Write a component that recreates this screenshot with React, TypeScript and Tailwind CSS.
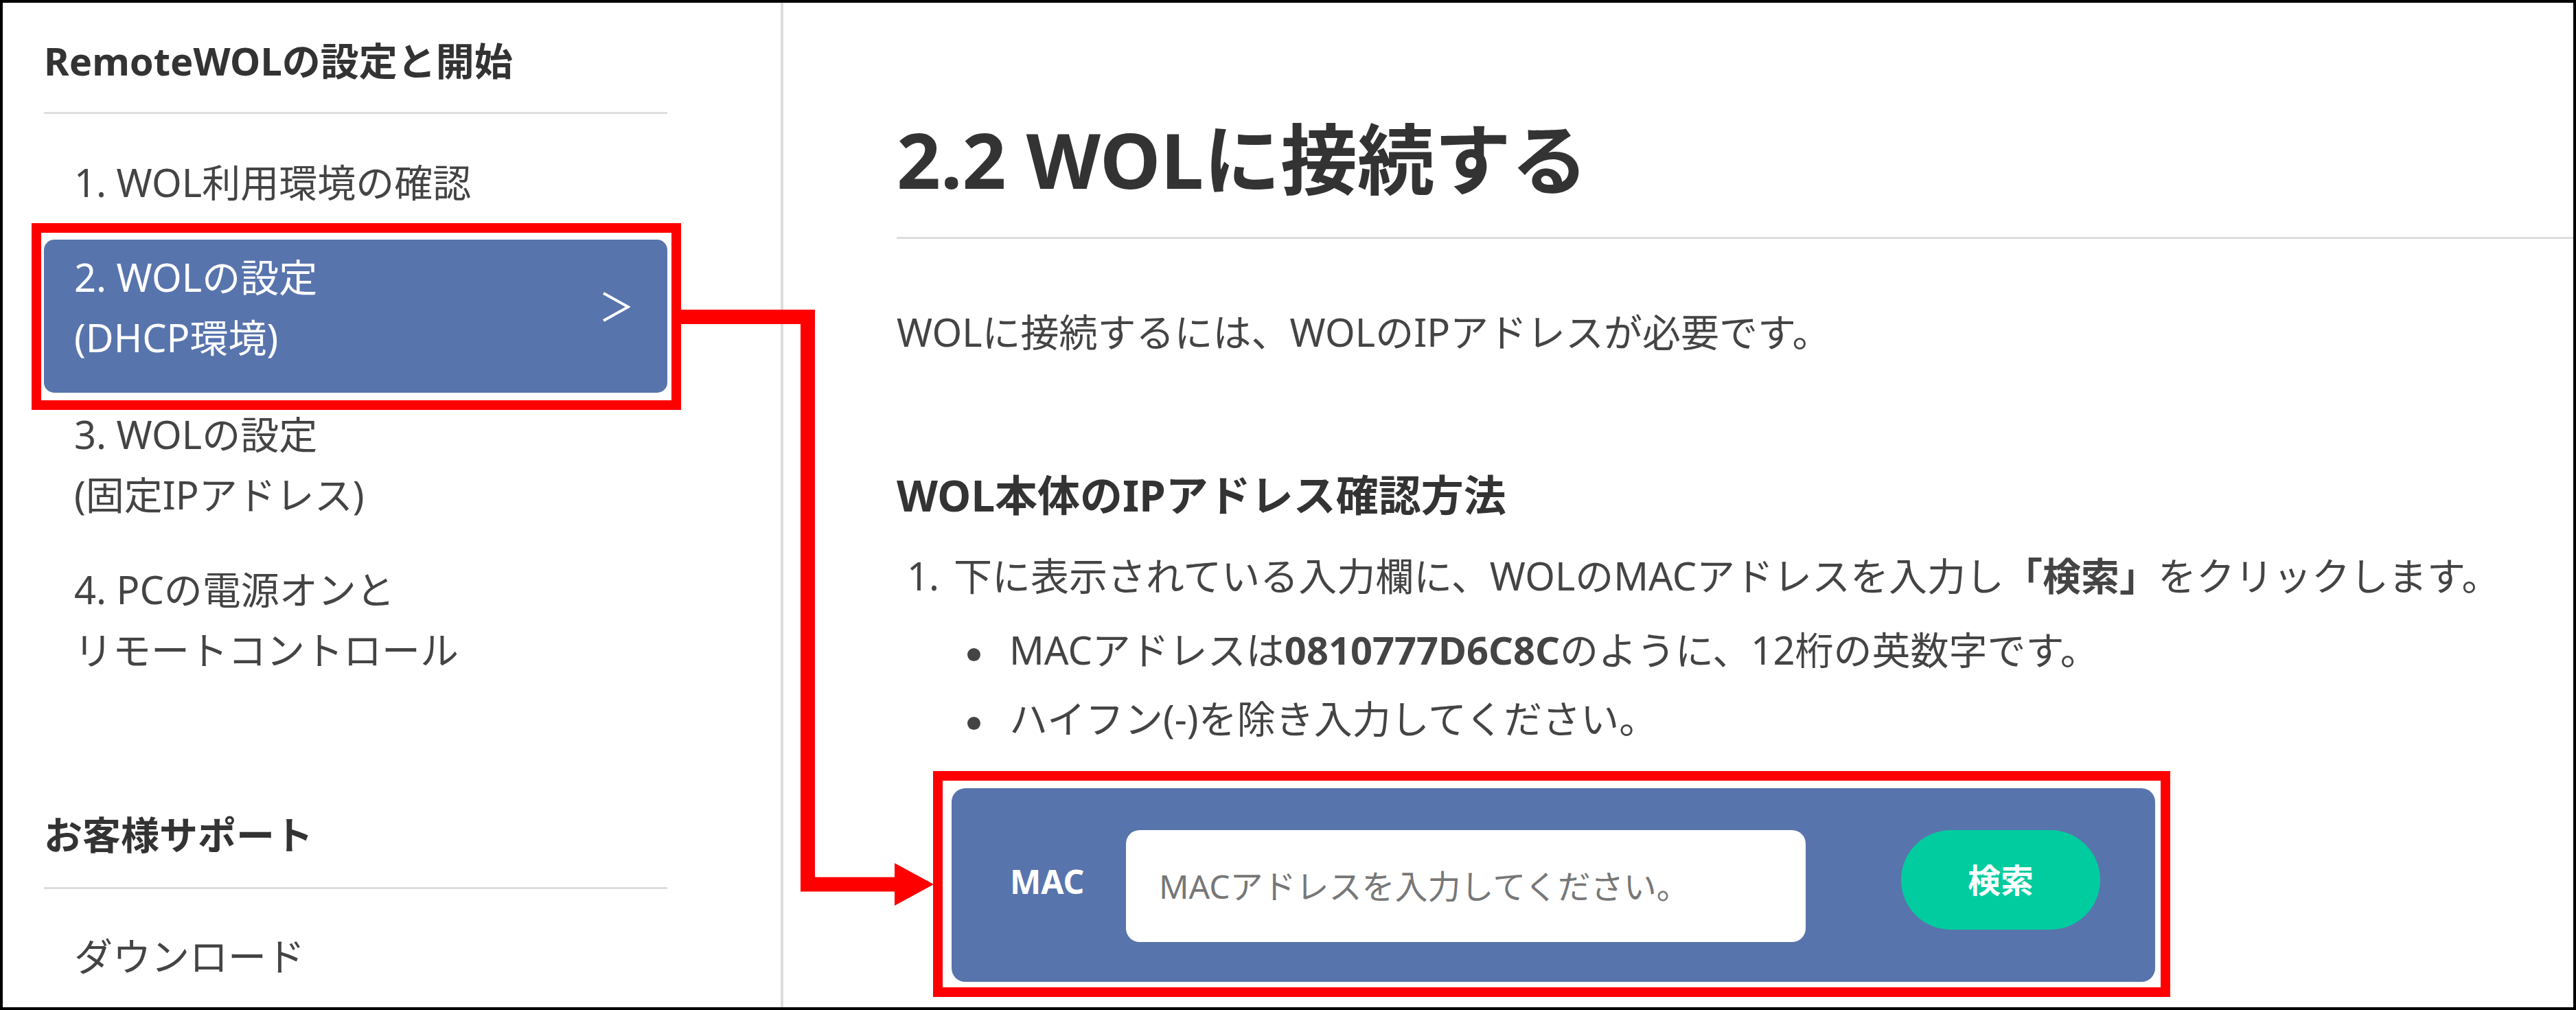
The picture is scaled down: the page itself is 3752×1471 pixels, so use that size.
import React from 'react';

const navItems = [
  { label: ['1. WOL利用環境の確認'], active: false, gap: 'mt-[55px]' },
  { label: ['2. WOLの設定', '(DHCP環境)'], active: true, gap: 'mt-[40px]' },
  { label: ['3. WOLの設定', '(固定IPアドレス)'], active: false, gap: 'mt-[16px]' },
  { label: ['4. PCの電源オンと', 'リモートコントロール'], active: false, gap: 'mt-[50px]' },
];

function Chevron() {
  return (
    <svg width="42" height="46" viewBox="0 0 42 46" fill="none">
      <polyline points="3,3 39,23 3,43" stroke="#ffffff" strokeWidth="4" strokeLinejoin="miter" />
    </svg>
  );
}

function Sidebar() {
  return (
    <aside className="w-[1137px] shrink-0 border-r-4 border-[#dddddd] pl-[60px] pt-[44px]">
      <div className="w-[908px]">
        {/* Section heading */}
        <h2 className="text-[56px] leading-[80px] font-bold text-[#333333]">RemoteWOLの設定と開始</h2>
        <div className="mt-[35px] h-[3px] bg-[#dddddd]" />

        {/* Steps */}
        {navItems.map((item) =>
          item.active ? (
            <div
              key={item.label[0]}
              className={`${item.gap} flex items-center justify-between rounded-[15px] bg-[#5874ad] pl-[44px] pr-[54px] pt-[10px] pb-[37px] text-white`}
            >
              <p className="text-[56px] leading-[88px]">
                {item.label.map((line) => (
                  <span key={line} className="block">
                    {line}
                  </span>
                ))}
              </p>
              <Chevron />
            </div>
          ) : (
            <p key={item.label[0]} className={`${item.gap} pl-[44px] text-[56px] leading-[88px] text-[#444444]`}>
              {item.label.map((line) => (
                <span key={line} className="block">
                  {line}
                </span>
              ))}
            </p>
          )
        )}

        {/* Support */}
        <h2 className="mt-[185px] text-[56px] leading-[80px] font-bold text-[#333333]">お客様サポート</h2>
        <div className="mt-[37px] h-[3px] bg-[#dddddd]" />
        <p className="mt-[53px] pl-[44px] text-[56px] leading-[88px] text-[#444444]">ダウンロード</p>
      </div>
    </aside>
  );
}

function MacForm() {
  return (
    <div className="mt-[58px] ml-[80px] flex h-[282px] w-[1753px] items-start rounded-[20px] bg-[#5874ad] pt-[61px] pl-[85px]">
      <div className="flex h-[149px] w-[169px] items-center text-[48px] font-bold text-white">MAC</div>
      <input
        type="text"
        placeholder="MACアドレスを入力してください。"
        className="h-[163px] w-[990px] rounded-[20px] bg-white pl-[48px] text-[48px] text-[#444444] outline-none placeholder:text-[#777777]"
      />
      <button className="ml-[139px] h-[145px] w-[290px] rounded-full bg-[#00cc9f] text-[48px] font-bold text-white">
        検索
      </button>
    </div>
  );
}

function Content() {
  return (
    <main className="flex-1 pl-[165px] pt-[158px] text-[#444444]">
      <h1 className="text-[112px] leading-[140px] font-bold text-[#333333]">2.2 WOLに接続する</h1>
      <div className="mt-[43px] h-[3px] bg-[#dddddd]" />

      <p className="mt-[91px] text-[56px] leading-[88px]">WOLに接続するには、WOLのIPアドレスが必要です。</p>

      <h2 className="mt-[150px] text-[62px] leading-[88px] font-bold text-[#333333]">WOL本体のIPアドレス確認方法</h2>

      <div className="mt-[29px] flex pl-[15px] text-[56px] leading-[88px]">
        <span className="w-[68px] shrink-0">1.</span>
        <span>
          下に表示されている入力欄に、WOLのMACアドレスを入力し<strong className="font-bold">「検索」</strong>をクリックします。
        </span>
      </div>

      <ul className="mt-[20px] pl-[103px] text-[56px] leading-[88px]">
        <li className="flex items-center">
          <span className="mt-[14px] mr-[42px] h-[19px] w-[19px] shrink-0 rounded-full bg-[#444444]" />
          <span>
            MACアドレスは<strong className="font-bold">0810777D6C8C</strong>のように、12桁の英数字です。
          </span>
        </li>
        <li className="mt-[12px] flex items-center">
          <span className="mt-[14px] mr-[42px] h-[19px] w-[19px] shrink-0 rounded-full bg-[#444444]" />
          <span>ハイフン(-)を除き入力してください。</span>
        </li>
      </ul>

      <MacForm />
    </main>
  );
}

// red callout frames and connector drawn over the page
function Callouts() {
  return (
    <svg
      className="pointer-events-none absolute -left-1 -top-1"
      width="3752"
      height="1471"
      viewBox="0 0 3752 1471"
      fill="none"
    >
      <rect x="53" y="332" width="932" height="258" stroke="#ff0000" strokeWidth="14" />
      <rect x="1366" y="1130" width="1788" height="315" stroke="#ff0000" strokeWidth="14" />
      <polyline
        points="992,461.5 1176.5,461.5 1176.5,1288 1306,1288"
        stroke="#ff0000"
        strokeWidth="21"
        strokeLinejoin="miter"
      />
      <polygon points="1303,1257 1360,1288 1303,1319" fill="#ff0000" />
    </svg>
  );
}

export default function App() {
  return (
    <div className="relative flex h-[1471px] w-[3752px] overflow-hidden border-4 border-black bg-white font-['Noto_Sans','Noto_Sans_CJK_JP',sans-serif] [text-spacing-trim:space-all]">
      <Sidebar />
      <Content />
      <Callouts />
    </div>
  );
}
